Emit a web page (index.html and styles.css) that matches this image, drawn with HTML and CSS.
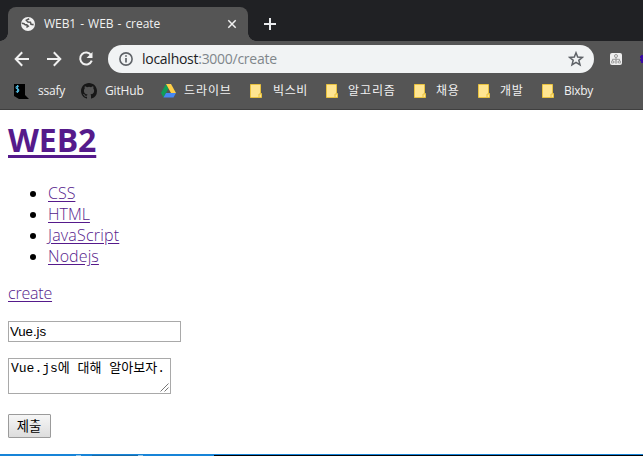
FILE: index.html
```
<!DOCTYPE html>
<html lang="ko">
<head>
<meta charset="utf-8">
<title>WEB1 - WEB - create</title>
<link rel="stylesheet" href="styles.css">
</head>
<body>
<header class="browser">
  <div class="tabstrip">
    <div class="tab">
      <svg class="globe" width="14" height="14" viewBox="0 0 14 14"><circle cx="7" cy="7" r="7" fill="#f1f1f1"/><path d="M.8 6.2 3 6.6Q4 8.3 5.8 7.8L7.2 9.2 5.4 10.4M8.2 1.8 5.4 3.2 7 5 9.4 5.3 10 7.2 12.6 7.6" fill="none" stroke="#555" stroke-width="1.6"/></svg>
      <span class="tab-title">WEB1 - WEB - create</span>
      <svg class="close" width="10" height="10" viewBox="0 0 10 10"><path d="M1.3 1.3 8.7 8.7M8.7 1.3 1.3 8.7" stroke="#f1f1f1" stroke-width="1.5"/></svg>
    </div>
    <svg class="plus" width="12" height="12" viewBox="0 0 12 12"><path d="M6 0V12M0 6H12" stroke="#e8eaed" stroke-width="2"/></svg>
  </div>
  <div class="toolbar">
    <svg class="nav" width="16" height="16" viewBox="0 0 16 16"><path d="M15 8H2M8.2 1.3 1.7 8 8.2 14.7" fill="none" stroke="#f1f1f1" stroke-width="2"/></svg>
    <svg class="nav" width="16" height="16" viewBox="0 0 16 16"><path d="M1 8H14M7.8 1.3 14.3 8 7.8 14.7" fill="none" stroke="#f1f1f1" stroke-width="2"/></svg>
    <svg class="nav" width="16" height="16" viewBox="0 0 16 16"><path d="M13.2 4.2A6 6 0 1 0 13.8 9.7" fill="none" stroke="#f1f1f1" stroke-width="2"/><path d="M14.5 1V7H8.5Z" fill="#f1f1f1"/></svg>
    <div class="omnibox">
      <svg width="14" height="14" viewBox="0 0 14 14"><circle cx="7" cy="7" r="6.1" fill="none" stroke="#5f6368" stroke-width="1.6"/><path d="M7 6V10.5M7 3.2V4.8" stroke="#5f6368" stroke-width="1.7"/></svg>
      <span class="url">localhost<span class="path">:3000/create</span></span>
      <svg class="star" width="16" height="16" viewBox="0 0 16 16"><path d="M8 1.8 9.7 6.1 14.3 6.4 10.8 9.3 12 13.9 8 11.3 4 13.9 5.2 9.3 1.7 6.4 6.3 6.1Z" fill="none" stroke="#5f6368" stroke-width="1.5"/></svg>
    </div>
    <svg class="extension" width="12" height="12" viewBox="0 0 12 12"><rect width="12" height="12" rx="2" fill="#eee"/><circle cx="6" cy="3" r="1.5" fill="none" stroke="#999"/><path d="M6 4.5V8M2.5 8V6.3H9.5V8" fill="none" stroke="#999"/><path d="M1.5 8h2v2h-2zM5 8h2v2H5zM8.5 8h2v2h-2z" fill="none" stroke="#999" stroke-width=".8"/></svg>
    <svg class="extension-next" width="3" height="10" viewBox="0 0 3 10"><path d="M1 1H3V9H1V7H0V5H1V4H0V2H1Z" fill="#3b0ca3"/></svg>
  </div>
  <nav class="bookmarks">
    <span class="bookmark ssafy"><svg width="17" height="17" viewBox="0 0 17 17"><path d="M1 1H12V12L16 16H6L1 13Z" fill="#000"/><path d="M6 3.2H4.2Q3 3.3 3 4.6 3 5.7 4.5 5.9 6 6.2 5.8 7.4 5.7 8.8 4.2 8.8H2.8M4.5 2V10" fill="none" stroke="#4fb4d8" stroke-width="1.1"/></svg><span>ssafy</span></span>
    <span class="bookmark github"><svg width="16" height="16" viewBox="0 0 16 16"><path fill="#171717" d="M8 0C3.58 0 0 3.58 0 8c0 3.54 2.29 6.53 5.47 7.59.4.07.55-.17.55-.38 0-.19-.01-.82-.01-1.49-2.01.37-2.53-.49-2.69-.94-.09-.23-.48-.94-.82-1.13-.28-.15-.68-.52-.01-.53.63-.01 1.08.58 1.23.82.72 1.21 1.87.87 2.33.66.07-.52.28-.87.51-1.07-1.78-.2-3.64-.89-3.64-3.95 0-.87.31-1.59.82-2.15-.08-.2-.36-1.02.08-2.12 0 0 .67-.21 2.2.82a7.6 7.6 0 0 1 4 0c1.53-1.04 2.2-.82 2.2-.82.44 1.1.16 1.92.08 2.12.51.56.82 1.27.82 2.15 0 3.07-1.87 3.75-3.65 3.95.29.25.54.73.54 1.48 0 1.07-.01 1.93-.01 2.2 0 .21.15.46.55.38A8 8 0 0 0 16 8c0-4.42-3.58-8-8-8Z"/></svg><span>GitHub</span></span>
    <span class="bookmark drive"><svg width="15" height="14" viewBox="0 0 15 14"><path d="M5 0 0 9 2.5 13.5 7.5 4.5Z" fill="#119d58"/><path d="M5 0H10L15 9H10Z" fill="#ffcf48"/><path d="M5 9H15L12.5 13.5H2.5Z" fill="#4688f4"/></svg><span>드라이브</span></span>
    <span class="bookmark folder bixbi"><svg width="12" height="14" viewBox="0 0 12 14"><path d="M.5.5H10.5V9.5H11.5V13.5H.5Z" fill="#ffe591" stroke="#e9c23f"/><path d="M9 13V10H11" fill="none" stroke="#e9c23f"/></svg><span>빅스비</span></span>
    <span class="bookmark folder algorithm"><svg width="12" height="14" viewBox="0 0 12 14"><path d="M.5.5H10.5V9.5H11.5V13.5H.5Z" fill="#ffe591" stroke="#e9c23f"/><path d="M9 13V10H11" fill="none" stroke="#e9c23f"/></svg><span>알고리즘</span></span>
    <span class="bookmark folder short"><svg width="12" height="14" viewBox="0 0 12 14"><path d="M.5.5H10.5V9.5H11.5V13.5H.5Z" fill="#ffe591" stroke="#e9c23f"/><path d="M9 13V10H11" fill="none" stroke="#e9c23f"/></svg><span>채용</span></span>
    <span class="bookmark folder short"><svg width="12" height="14" viewBox="0 0 12 14"><path d="M.5.5H10.5V9.5H11.5V13.5H.5Z" fill="#ffe591" stroke="#e9c23f"/><path d="M9 13V10H11" fill="none" stroke="#e9c23f"/></svg><span>개발</span></span>
    <span class="bookmark folder bixby"><svg width="12" height="14" viewBox="0 0 12 14"><path d="M.5.5H10.5V9.5H11.5V13.5H.5Z" fill="#ffe591" stroke="#e9c23f"/><path d="M9 13V10H11" fill="none" stroke="#e9c23f"/></svg><span>Bixby</span></span>
  </nav>
</header>
<main>
  <h1><a href="#">WEB2</a></h1>
  <ul>
    <li><a href="#">CSS</a></li>
    <li><a href="#">HTML</a></li>
    <li><a href="#" class="js">JavaScript</a></li>
    <li><a href="#" class="node">Nodejs</a></li>
  </ul>
  <a href="#" class="create">create</a>
  <form>
    <input type="text" value="Vue.js">
    <div class="area"><span>Vue.js에 대해 알아보자.</span><svg width="9" height="9" viewBox="0 0 9 9"><path d="M.5 8.5 8.5.5M4.5 8.5 8.5 4.5" stroke="#777"/></svg></div>
    <button type="button">제출</button>
  </form>
</main>
<footer class="taskbar"><div class="taskbar-active"></div></footer>
</body>
</html>
```
FILE: styles.css
```
* { box-sizing: border-box; }
body {
  margin: 0;
  width: 643px;
  height: 456px;
  display: flex;
  flex-direction: column;
  overflow: hidden;
  background: #fff;
  font-family: "Open Sans", "Noto Sans CJK KR", sans-serif;
}
svg { display: block; flex: none; }
.browser { flex: none; height: 110px; background: #555; border-bottom: 1px solid #3f3f3f; }
.tabstrip { height: 41px; padding: 7px 0 0 8px; display: flex; background: #202124; }
.tab {
  position: relative;
  width: 240px;
  height: 34px;
  padding: 0 11px 0 13px;
  display: flex;
  align-items: center;
  border-radius: 8px 8px 0 0;
  background: #555;
}
.tab::before, .tab::after {
  content: "";
  position: absolute;
  bottom: 0;
  width: 8px;
  height: 8px;
}
.tab::before { left: -8px; background: radial-gradient(circle at 0 0, #202124 7.5px, #555 8px); }
.tab::after { right: -8px; background: radial-gradient(circle at 100% 0, #202124 7.5px, #555 8px); }
.tab-title { margin-left: 9px; color: #f1f1f1; font-size: 12px; line-height: 16px; letter-spacing: -.05px; word-spacing: 1px; white-space: nowrap; }
.close { margin-left: auto; }
.plus { margin: 11px 0 0 16px; }
.toolbar { height: 36px; padding-left: 14px; display: flex; align-items: center; }
.nav { margin-right: 16px; }
.omnibox {
  width: 486px;
  height: 28px;
  margin-left: -2px;
  padding: 0 10px 0 11px;
  display: flex;
  align-items: center;
  border-radius: 14px;
  background: #f1f3f4;
}
.url { margin-left: 9px; color: #202124; font-size: 14px; line-height: 20px; letter-spacing: -.27px; white-space: nowrap; }
.path { color: #80868b; }
.star { margin-left: auto; }
.extension { margin-left: 16px; }
.extension-next { margin-left: auto; }
.bookmarks { height: 32px; padding-left: 13px; display: flex; color: #f1f1f1; font-size: 12px; line-height: 16px; }
.bookmark { flex: none; display: flex; align-items: center; white-space: nowrap; padding-bottom: 4px; }
.ssafy { width: 68px; gap: 8px; letter-spacing: -.2px; }
.github { width: 80px; gap: 8px; letter-spacing: -.15px; }
.drive { width: 89px; gap: 8px; letter-spacing: .9px; }
.folder { gap: 10px; }
.bixbi { width: 76px; gap: 11px; letter-spacing: .6px; }
.algorithm { width: 88px; letter-spacing: .9px; }
.short { width: 64px; letter-spacing: .8px; }
.bixby { letter-spacing: -.3px; }
main { flex: 1; padding-left: 8px; font-size: 16px; line-height: 21px; font-weight: 300; }
a { color: #551a8b; text-decoration: underline; text-underline-offset: 2px; }
h1 { margin: 8px 0 0; font-size: 32px; line-height: 43px; font-weight: 700; letter-spacing: -.1px; }
h1 a { text-decoration-thickness: 3px; text-underline-offset: 3px; }
ul { margin: 22px 0 16px; padding-left: 40px; }
.js { letter-spacing: .2px; }
.node { letter-spacing: .1px; }
.create { display: block; width: max-content; letter-spacing: -.2px; }
form { display: flex; flex-direction: column; align-items: flex-start; margin-top: 17px; }
input { width: 173px; height: 21px; margin: 0; padding: 1px; border: 1px solid #a9a9a9; font: 13.33px "Liberation Sans", sans-serif; letter-spacing: -.1px; color: #000; }
.area { position: relative; width: 163px; height: 36px; margin-top: 16px; padding: 2px; border: 1px solid #a9a9a9; font: 13px/16px "Liberation Mono", "Noto Sans CJK KR", monospace; color: #000; white-space: nowrap; }
.area span { display: block; letter-spacing: 0; }
.area svg { position: absolute; right: 1px; bottom: 1px; }
button { width: 43px; height: 24px; margin: 20px 0 0; padding: 0 1px 0 0; border: 1px solid #9b9b9b; border-radius: 1px; background: linear-gradient(#f6f6f6, #ddd); color: #000; font: 13.33px "Noto Sans CJK KR", sans-serif; line-height: 20px; }
.taskbar { flex: none; height: 2px; border-top: 1px solid #1784d8; background: #000; }
.taskbar-active { width: 214px; height: 1px; background: linear-gradient(90deg, #1784d8 76px, #8ec3e8 76px 81px, #1784d8 81px 92px, #176aa8 92px 138px, #8ec3e8 138px 143px, #1784d8 143px); }
```
